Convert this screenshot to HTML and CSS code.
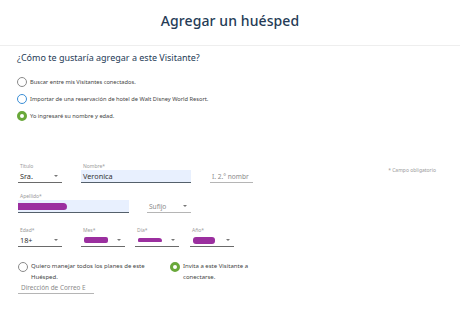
FILE: index.html
```html
<!DOCTYPE html>
<html lang="es">
<head>
<meta charset="utf-8">
<link rel="stylesheet" href="styles.css">
</head>
<body>
<header class="header"><h1 class="title">Agregar un huésped</h1></header>
<main class="content">
  <h2 class="question">¿Cómo te gustaría agregar a este Visitante?</h2>
  <ul class="options">
    <li class="option"><span class="radio"></span>Buscar entre mis Visitantes conectados.</li>
    <li class="option"><span class="radio radio-blue"></span>Importar de una reservación de hotel de Walt Disney World Resort.</li>
    <li class="option"><span class="radio radio-on"></span>Yo ingresaré su nombre y edad.</li>
  </ul>

  <div class="form">
    <div class="row row1">
      <div class="field w44">
        <span class="label">Título</span>
        <span class="input select">Sra.<span class="arrow"></span></span>
      </div>
      <div class="field w110">
        <span class="label">Nombre*</span>
        <span class="input filled">Veronica</span>
      </div>
      <div class="field w43">
        <span class="label">&nbsp;</span>
        <span class="input light placeholder">I. 2.° nombr</span>
      </div>
      <span class="required">* Campo obligatorio</span>
    </div>

    <div class="row row2">
      <div class="field w111">
        <span class="label">Apellido*</span>
        <span class="input filled"><span class="blot blot-last"></span></span>
      </div>
      <div class="field w44">
        <span class="label">&nbsp;</span>
        <span class="input select light placeholder">Sufijo<span class="arrow"></span></span>
      </div>
    </div>

    <div class="row row3">
      <div class="field w44">
        <span class="label">Edad*</span>
        <span class="input select">18+<span class="arrow"></span></span>
      </div>
      <div class="field w44">
        <span class="label">Mes*</span>
        <span class="input select"><span class="blot blot-mes"></span><span class="arrow"></span></span>
      </div>
      <div class="field w44">
        <span class="label">Día*</span>
        <span class="input select"><span class="blot blot-dia"></span><span class="arrow"></span></span>
      </div>
      <div class="field w44">
        <span class="label">Año*</span>
        <span class="input select"><span class="blot blot-ano"></span><span class="arrow"></span></span>
      </div>
    </div>

    <div class="row row4">
      <div class="option2 col1"><span class="radio"></span><span class="otext">Quiero manejar todos los planes de este Huésped.</span></div>
      <div class="option2 col2"><span class="radio radio-on"></span><span class="otext">Invita a este Visitante a conectarse.</span></div>
    </div>

    <div class="field email">
      <span class="input light placeholder">Dirección de Correo E</span>
    </div>
  </div>
</main>
</body>
</html>
```
FILE: styles.css
```css
* { box-sizing: border-box; }
html, body { margin: 0; padding: 0; background: #fff; }
body {
  width: 460px;
  height: 314px;
  overflow: hidden;
  font-family: "Noto Sans", "Open Sans", sans-serif;
  color: #3b3b3b;
}
.header {
  height: 46px;
  border-bottom: 1px solid #eeeeee;
  display: flex;
  justify-content: center;
  align-items: center;
  padding-bottom: 4px;
}
.title {
  margin: 0;
  font-size: 14px;
  font-weight: 500;
  color: #253b56;
  letter-spacing: 0.1px;
}
.content { padding: 0 0 0 17px; }
.question {
  margin: 5px 0 0;
  font-size: 9px;
  line-height: 14px;
  font-weight: 400;
  color: #253b56;
}
.options { list-style: none; margin: 8px 0 0; padding: 0; }
.option {
  display: flex;
  align-items: center;
  height: 17px;
  font-size: 5.7px;
  color: #444;
}
.radio {
  width: 10px;
  height: 10px;
  border-radius: 50%;
  border: 1px solid #8a8a8a;
  margin-right: 3px;
  flex: none;
  background: #fff;
}
.radio-blue { border-color: #3a8ed6; }
.radio-on { border: 3px solid #69a83a; }

.form { margin-top: 38px; padding-left: 1px; padding-right: 24px; }
.row { display: flex; align-items: flex-start; }
.row1 .field + .field { margin-left: 19px; }
.row2 { margin-top: 9px; }
.row2 .field + .field { margin-left: 18px; }
.row3 { margin-top: 13px; }
.row3 .field:nth-child(2) { margin-left: 19px; }
.row3 .field:nth-child(3) { margin-left: 10px; }
.row3 .field:nth-child(4) { margin-left: 11px; }
.field { display: flex; flex-direction: column; }
.w43 { width: 43px; }
.w44 { width: 44px; }
.w110 { width: 110px; }
.w111 { width: 111px; }
.label {
  font-size: 5px;
  line-height: 8px;
  height: 8px;
  color: #9a9a9a;
  padding-left: 2px;
}
.input {
  position: relative;
  display: flex;
  align-items: center;
  height: 13px;
  font-size: 7.3px;
  color: #333;
  padding-left: 2px;
  border-bottom: 1.5px solid #6a6a6a;
  white-space: nowrap;
  overflow: hidden;
}
.input.light { border-bottom: 1px solid #b5b5b5; }
.input.filled { background: #e8f0fe; border-bottom-color: #54606b; }
.placeholder { color: #8a8a8a; font-size: 6.6px; }
.arrow {
  position: absolute;
  right: 4px;
  top: 5px;
  width: 0;
  height: 0;
  border-left: 2.5px solid transparent;
  border-right: 2.5px solid transparent;
  border-top: 2.5px solid #777;
}
.required {
  margin-left: auto;
  margin-top: 5px;
  font-size: 5px;
  color: #9a9a9a;
}
.blot { display: inline-block; background: #9b2f9f; border-radius: 4px; }
.blot-last { width: 52px; height: 7px; margin-left: -5px; border-radius: 4px 6px 5px 4px; }
.blot-mes { width: 24px; height: 6px; margin-left: 1px; border-radius: 2px; }
.blot-dia { width: 24px; height: 4px; margin-left: 1px; border-radius: 3px 6px 2px 2px; }
.blot-ano { width: 22px; height: 7px; margin-left: 1px; border-radius: 3px; }

.row4 { margin-top: 14px; }
.option2 {
  display: flex;
  align-items: flex-start;
  font-size: 6px;
  line-height: 11px;
  color: #444;
}
.option2 .radio { margin-top: 0.5px; }
.col1 { width: 152px; }
.col1 .otext { width: 120px; }
.col2 .otext { width: 72px; }
.email { width: 76px; margin-top: -2px; }
.email .input { padding-left: 3px; font-size: 6.4px; }
```
